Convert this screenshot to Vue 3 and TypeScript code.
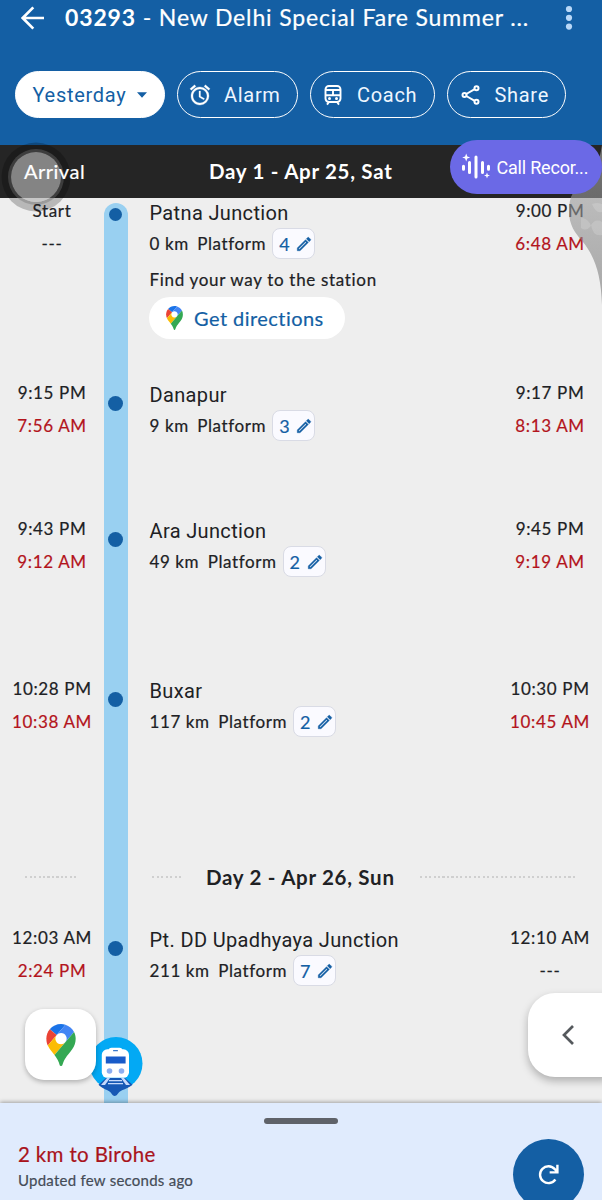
<script setup lang="ts">
interface Stop {
  name: string
  km: number
  platform: number
  arrival: string
  arrivalActual: string
  departure: string
  departureActual: string
  size: string
  directions?: boolean
}

const dayOne: Stop[] = [
  { name: 'Patna Junction', km: 0, platform: 4, arrival: 'Start', arrivalActual: '---', departure: '9:00 PM', departureActual: '6:48 AM', size: 'first', directions: true },
  { name: 'Danapur', km: 9, platform: 3, arrival: '9:15 PM', arrivalActual: '7:56 AM', departure: '9:17 PM', departureActual: '8:13 AM', size: 'short' },
  { name: 'Ara Junction', km: 49, platform: 2, arrival: '9:43 PM', arrivalActual: '9:12 AM', departure: '9:45 PM', departureActual: '9:19 AM', size: 'medium' },
  { name: 'Buxar', km: 117, platform: 2, arrival: '10:28 PM', arrivalActual: '10:38 AM', departure: '10:30 PM', departureActual: '10:45 AM', size: 'long' },
]
const dayTwo: Stop[] = [
  { name: 'Pt. DD Upadhyaya Junction', km: 211, platform: 7, arrival: '12:03 AM', arrivalActual: '2:24 PM', departure: '12:10 AM', departureActual: '---', size: 'last' },
]
const groups = [
  { label: '', stops: dayOne },
  { label: 'Day 2 - Apr 26, Sun', stops: dayTwo },
]
</script>

<template>
  <div class="screen">
    <header class="top">
      <div class="title-row">
        <svg class="back" viewBox="0 0 24 24"><path d="M23 12H2M12.3 1.4 1.7 12l10.6 10.6" fill="none" stroke="#fff" stroke-width="2.7" /></svg>
        <h1><b>03293</b><span> - New Delhi Special Fare Summer ...</span></h1>
        <svg class="more" viewBox="0 0 8 26"><g fill="#b9d8f8"><circle cx="4" cy="4" r="3.1" /><circle cx="4" cy="12.8" r="3.1" /><circle cx="4" cy="21.6" r="3.1" /></g></svg>
      </div>
      <nav class="chips">
        <button class="chip day">Yesterday<svg class="caret" viewBox="0 0 10 6"><path d="M0 .3h10L5 5.7z" fill="#145fa4" /></svg></button>
        <button class="chip alarm">
          <svg viewBox="0 0 24 24"><path fill="#fff" stroke="#fff" stroke-width=".3" d="m22 5.720-4.600-3.860-1.290 1.530 4.600 3.860L22 5.720zM7.880 3.390 6.600 1.860 2 5.710l1.290 1.530 4.590-3.850zM12.500 8H11v6l4.750 2.850.75-1.230-4-2.370V8zM12 4c-4.970 0-9 4.030-9 9s4.020 9 9 9a9 9 0 0 0 0-18zm0 16c-3.870 0-7-3.130-7-7s3.130-7 7-7 7 3.130 7 7-3.130 7-7 7z" /></svg>
          Alarm
        </button>
        <button class="chip coach">
          <svg viewBox="0 0 24 24"><g fill="none" stroke="#fff" stroke-width="1.9"><rect x="4.500" y="3" width="15" height="16" rx="3.400" /><path d="M4.500 7h15M4.500 12.300h15M12 7v5.300M8 19l-2 2.600M16 19l2 2.600" /></g><g fill="#fff"><circle cx="8.500" cy="15.600" r="1.500" /><circle cx="15.500" cy="15.600" r="1.500" /></g></svg>
          Coach
        </button>
        <button class="chip share">
          <svg viewBox="0 0 24 24"><g fill="none" stroke="#fff" stroke-width="2"><circle cx="5.500" cy="12" r="2" /><circle cx="17.500" cy="5.200" r="2" /><circle cx="17.500" cy="18.800" r="2" /><path d="m7.300 11 8.400-4.800M7.300 13l8.400 4.800" /></g></svg>
          Share
        </button>
      </nav>
    </header>

    <div class="daybar">
      <span class="arrival">Arrival</span>
      <strong>Day 1 - Apr 25, Sat</strong>
    </div>

    <main class="timeline">
      <div class="track"></div>
      <template v-for="g in groups" :key="g.label">
        <div v-if="g.label" class="divider">
          <i class="dots left"></i><i class="dots mid"></i><strong>{{ g.label }}</strong><i class="dots right"></i>
        </div>
        <section v-for="s in g.stops" :key="s.name" class="stop" :class="s.size">
          <div class="times"><span>{{ s.arrival }}</span><span :class="{ late: s.arrivalActual !== '---' }">{{ s.arrivalActual }}</span></div>
          <div class="rail"><i class="dot"></i></div>
          <div class="info">
            <h2>{{ s.name }}</h2>
            <div class="meta">
              <span class="km">{{ s.km }} km</span><span>Platform</span>
              <span class="platform">{{ s.platform }}
                <svg viewBox="0 0 24 24"><path fill="#145fa4" stroke="#145fa4" stroke-width=".5" d="m14.060 9.020.92.92L5.920 19H5v-.92l9.060-9.060M17.660 3c-.25 0-.51.1-.7.290l-1.830 1.830 3.750 3.750 1.830-1.830a1 1 0 0 0 0-1.410l-2.340-2.340c-.2-.2-.45-.29-.71-.29zm-3.600 3.190L3 17.250V21h3.750L17.810 9.940l-3.750-3.750z" /></svg>
              </span>
            </div>
            <template v-if="s.directions">
              <p>Find your way to the station</p>
              <button class="directions">
                <svg viewBox="0 0 92.3 132.3"><use href="#map-pin" /></svg>Get directions
              </button>
            </template>
          </div>
          <div class="times"><span>{{ s.departure }}</span><span :class="{ late: s.departureActual !== '---' }">{{ s.departureActual }}</span></div>
        </section>
      </template>
    </main>

    <footer class="sheet">
      <i class="handle"></i>
      <div class="status">
        <strong>2 km to Birohe</strong>
        <span>Updated few seconds ago</span>
      </div>
      <button class="refresh">
        <svg viewBox="0 0 24 24"><path d="M19.200 17.200A8.800 8.800 0 1 1 18.600 6.400L21 9M21.300 1.800v8H13.200" fill="none" stroke="#fff" stroke-width="2.500" /></svg>
      </button>
    </footer>

    <svg class="train" viewBox="0 0 54 60">
      <circle cx="27" cy="26.500" r="26.500" fill="#03a9f4" />
      <path d="M17 41h19l7.600 6.800C39 51.500 34 52.500 31 54.500c-2 1.300-3 4.500-5.300 4.500S22.500 55.800 20.500 54.500C17.500 52.500 13 51.500 9.500 47.800z" fill="#1658b5" />
      <path d="m18 41-6 7h4l5-7zm17 0 6 7h-4l-5-7zM20 43h13v1.200H20zm-1 3h15v1.200H19z" fill="#c6d9fb" />
      <rect x="19.500" y="10.800" width="14" height="6" rx="3" fill="#fff" />
      <rect x="12.800" y="12.300" width="27.200" height="28.500" rx="5.500" fill="#fff" />
      <rect x="24" y="13" width="5" height="1.300" rx=".6" fill="#3978cc" />
      <rect x="16.800" y="19.500" width="19.800" height="7" fill="#195bc9" />
      <circle cx="20.500" cy="34" r="2.800" fill="#8daef0" /><circle cx="32.500" cy="34" r="2.800" fill="#8daef0" />
    </svg>
    <button class="map-button"><svg viewBox="0 0 92.3 132.3"><use href="#map-pin" /></svg></button>
    <button class="expand"><svg viewBox="0 0 12 20"><path d="M11 1 2 10l9 9" fill="none" stroke="#55595d" stroke-width="2.700" /></svg></button>

    <svg class="shade" viewBox="0 0 36 160">
      <defs>
        <linearGradient id="fade" x1="0" y1="0" x2="0" y2="1">
          <stop offset="0" stop-color="#aaa" stop-opacity=".6" />
          <stop offset=".6" stop-color="#8c8c8c" stop-opacity=".6" />
          <stop offset="1" stop-color="#909090" stop-opacity=".75" />
        </linearGradient>
      </defs>
      <path d="M36 0v160C35 130 29 112 17 97 9 88 3 80 3 66 3 51 8 43 19 38 29 32 33 18 36 0z" fill="url(#fade)" />
      <path d="M26 59q5-2 10 0v8q-6 2-10-8zM15 73q7 0 10 8-5 6-10 2zM25 80q5-7 11-3v13q-9 2-11-10z" fill="#eee" fill-opacity=".22" />
    </svg>
    <i class="touch"></i>
    <button class="call">
      <svg viewBox="0 0 30 28"><g stroke="#fff" stroke-width="3" stroke-linecap="round"><path d="M2.500 13.200v3M8.500 9.500v10M15 4v20M21.500 9.500v10M27.500 13.200v3" /></g><path d="m5.200.5 1.100 2.900 2.900 1.100-2.900 1.100-1.100 2.900-1.100-2.900L1.200 4.500l2.900-1.100zM26 19.500l.8 2.200 2.200.8-2.200.8-.8 2.200-.8-2.200-2.200-.8 2.200-.8z" fill="#fff" /></svg>
      Call Recor...
    </button>

    <svg class="defs">
      <defs>
        <g id="map-pin">
          <circle cx="46" cy="46" r="22" fill="#fff" />
          <path fill="#1a73e8" d="M60.2 2.200C55.800.8 51 0 46.100 0 32 0 19.300 6.400 10.800 16.500l21.800 18.300z" />
          <path fill="#ea4335" d="M10.800 16.500C4.100 24.500 0 34.900 0 46.100c0 8.700 1.700 15.700 4.600 22l28-33.300z" />
          <path fill="#4285f4" d="M46.200 28.500a17.700 17.700 0 0 1 13.500 29.100l27.500-32.700c-5.600-10.800-15.300-19-27-22.700L32.600 34.800c3.300-3.800 8.100-6.300 13.600-6.300" />
          <path fill="#fbbc04" d="M46.200 63.800a17.700 17.700 0 0 1-13.600-29l-28 33.300c4.800 10.600 12.800 19.200 21 29.900l34.100-40.500c-3.300 3.900-8.100 6.300-13.500 6.300" />
          <path fill="#34a853" d="M59.100 109.200c15.400-24.100 33.300-35 33.300-63 0-7.700-1.900-14.900-5.200-21.300L25.600 98c2.600 3.400 5.300 7.300 7.900 11.300 9.400 14.500 6.800 23.100 12.800 23.100s3.400-8.700 12.800-23.200" />
        </g>
      </defs>
    </svg>
  </div>
</template>

<style>
body { margin: 0; overflow: hidden; }
</style>

<style scoped>
* { box-sizing: border-box; }
.screen { position: relative; width: 602px; height: 1200px; overflow: hidden; display: flex; flex-direction: column; background: #eee; color: #202124; font-family: Lato, "Noto Sans", sans-serif; -webkit-text-stroke-width: .2px; }
button { border: 0; padding: 0; margin: 0; font: inherit; display: flex; align-items: center; white-space: nowrap; }
h1, h2, p { margin: 0; font-weight: 400; white-space: nowrap; }
i { display: block; }
svg { flex: none; display: block; }
.defs { position: absolute; width: 0; height: 0; }

.top { height: 145px; background: #145fa4; }
.title-row { height: 36px; display: flex; align-items: center; padding-left: 21px; }
.back { width: 24px; height: 24px; }
h1 { width: 480px; margin-left: 20px; padding-bottom: 2px; color: #fff; font-size: 23px; line-height: 34px; letter-spacing: .85px; }
h1 b { font-weight: 700; -webkit-text-stroke-width: 0; }
.more { width: 8px; height: 26px; margin-left: 20px; }
.chips { display: flex; gap: 12px; padding: 35px 0 0 15px; }
.chip { height: 47px; border: 1.500px solid #fff; border-radius: 24px; background: transparent; color: #eef6ff; font: 20px Roboto, sans-serif; letter-spacing: .7px; -webkit-text-stroke-width: 0; }
.chip svg { width: 24px; height: 24px; }
.day { width: 150px; background: #fff; color: #145fa4; padding-left: 16.500px; }
.chip .caret { width: 10px; height: 6px; margin: 1px 0 0 11px; }
.alarm { width: 121px; padding-left: 10px; gap: 12px; }
.coach { width: 125px; padding-left: 10px; gap: 12px; }
.share { width: 119px; padding-left: 11px; gap: 11.500px; }

.daybar { height: 53px; flex: none; padding-bottom: 1px; background: #252525; color: #fff; display: flex; align-items: center; font-size: 20px; }
.arrival { position: relative; z-index: 2; width: 185px; padding-left: 24px; letter-spacing: .5px; }
.daybar strong { margin-left: 24px; font-size: 20.500px; letter-spacing: .7px; }
strong { font-weight: 700; -webkit-text-stroke-width: 0; }

.timeline { position: relative; height: 905px; flex: none; }
.track { position: absolute; left: 104px; top: 5px; bottom: 0; width: 23.500px; background: #99d0f1; border-radius: 12px 12px 0 0; }
.stop { position: relative; display: grid; grid-template-columns: 104px 24px 370px 104px; }
.first { height: 182px; }
.short { height: 136px; }
.medium { height: 160px; }
.long { height: 179px; }
.times { position: relative; z-index: 2; display: flex; flex-direction: column; gap: 6.500px; text-align: center; font-size: 17px; line-height: 26px; letter-spacing: .65px; }
.late { color: #b3141c; }
.rail { padding: 16px 0 0 4px; }
.first .rail { padding: 9.500px 0 0 5px; }
.dot { width: 15px; height: 15px; border-radius: 50%; background: #145fa4; }
.first .dot { width: 13px; height: 13px; }
.info { padding-left: 21.500px; }
h2 { font: 20px/30px Roboto, sans-serif; letter-spacing: .35px; -webkit-text-stroke-width: 0; }
.meta { display: flex; align-items: center; height: 31px; font-size: 17px; letter-spacing: .6px; white-space: nowrap; }
.km { margin-right: 8.500px; }
.platform { width: 43px; height: 31px; margin-left: 6px; padding-left: 6px; display: flex; align-items: center; gap: 5px; border: 1.500px solid #d9dbe5; border-radius: 8px; background: #fafaff; color: #145fa4; font-size: 18px; }
.platform svg { width: 18px; height: 18px; }
p { margin-top: 8px; font-size: 17px; line-height: 26px; letter-spacing: .68px; }
.directions { width: 196px; height: 42px; margin-top: 4px; margin-left: -.5px; border-radius: 21px; background: #fff; color: #145fa4; padding-left: 17px; gap: 11px; font-size: 20px; letter-spacing: .45px; }
.directions svg { width: 17px; height: 24px; }
.divider { position: relative; height: 44px; margin-bottom: 26px; display: flex; align-items: center; }
.divider strong { width: 189px; margin: 0 25px 0 24px; font-size: 20.500px; letter-spacing: .7px; white-space: nowrap; }
.dots { height: 2px; background: repeating-linear-gradient(90deg, #cfcfcf 0 2px, transparent 2px 4.500px); }
.dots.left { width: 52px; margin-left: 25px; }
.dots.mid { width: 30px; margin-left: 75px; }
.dots.right { width: 157px; }

.sheet { position: relative; height: 97px; flex: none; background: #e0ebfd; box-shadow: 0 -1px 4px #0005; display: grid; grid-template-columns: 513px 71px; align-content: start; }
.handle { grid-column: 1 / 3; width: 74px; height: 6px; margin: 15px 0 0 264px; border-radius: 3px; background: #5f6269; }
.status { display: flex; flex-direction: column; padding: 16px 0 0 18px; }
.status strong { color: #a9131c; font-size: 20.500px; line-height: 28px; font-weight: 400; letter-spacing: .35px; -webkit-text-stroke-width: .2px; }
.status span { color: #454c57; font-size: 15px; line-height: 24px; letter-spacing: .25px; }
.refresh { width: 71px; height: 71px; margin-top: 15px; border-radius: 50%; background: #145fa4; justify-content: center; }
.refresh svg { width: 23px; height: 23px; }

.train { position: absolute; left: 89px; top: 1037px; width: 54px; height: 60px; }
.map-button { position: absolute; left: 25px; top: 1009px; width: 71px; height: 71px; border-radius: 19px; background: #fff; box-shadow: 0 2px 5px #0004; justify-content: center; }
.map-button svg { width: 30px; height: 42px; }
.expand { position: absolute; left: 528px; top: 993px; width: 80px; height: 84px; border-radius: 27px 0 0 27px; background: #fff; box-shadow: 0 4px 8px #0004; padding-left: 34px; }
.expand svg { width: 12px; height: 20px; }
.shade { position: absolute; z-index: 3; left: 566px; top: 145px; width: 36px; height: 160px; }
.touch { position: absolute; z-index: 1; left: 11px; top: 152px; width: 50px; height: 50px; border-radius: 50%; background: #b4b4b4aa; box-shadow: 0 0 0 3px #70707066, 0 0 0 9.500px #0000003a; }
.call { position: absolute; z-index: 4; left: 449.500px; top: 140px; width: 152px; height: 54px; border-radius: 27px; background: #6b69e6; color: #fff; padding-left: 11px; gap: 6px; font: 18px Roboto, sans-serif; letter-spacing: -.2px; -webkit-text-stroke-width: 0; }
.call svg { width: 30px; height: 28px; }
</style>
